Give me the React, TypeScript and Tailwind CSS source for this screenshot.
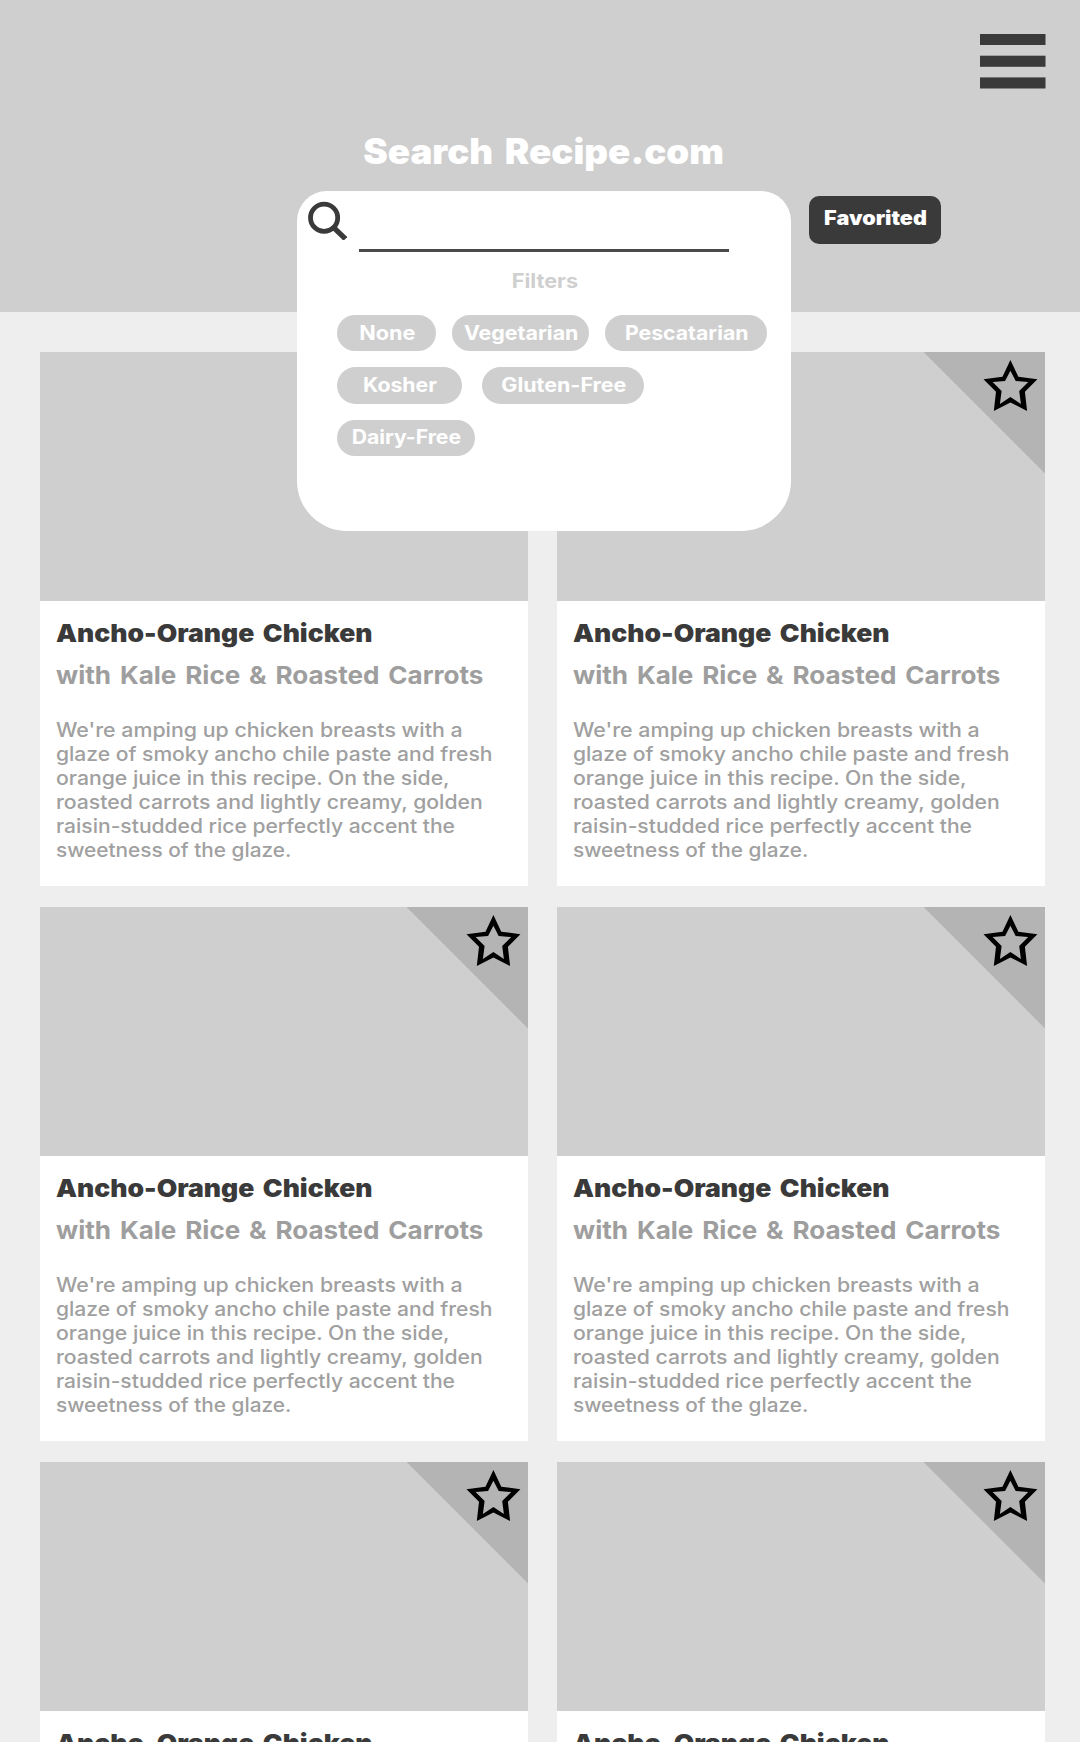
type Filter = { label: string; pill: string; text: string };

const filterRows: { row: string; filters: Filter[] }[] = [
  {
    row: "flex h-9 leading-9",
    filters: [
      { label: "None", pill: "w-[99px] pl-px", text: "scale-x-[1.11]" },
      { label: "Vegetarian", pill: "ml-4 w-[137px] pl-px", text: "scale-x-[1.097]" },
      { label: "Pescatarian", pill: "ml-4 w-[162px] pl-px", text: "scale-x-[1.09]" },
    ],
  },
  {
    row: "mt-4 flex h-[37px] leading-[37px]",
    filters: [
      { label: "Kosher", pill: "w-[125px]", text: "scale-x-[1.09]" },
      { label: "Gluten-Free", pill: "ml-5 w-[162px] pl-px", text: "scale-x-[1.1]" },
    ],
  },
  {
    row: "mt-4 flex h-9 leading-[35px]",
    filters: [{ label: "Dairy-Free", pill: "w-[138px]", text: "scale-x-[1.085]" }],
  },
];

const description = [
  { text: "We're amping up chicken breasts with a", fit: "scale-x-[1.095]" },
  { text: "glaze of smoky ancho chile paste and fresh", fit: "scale-x-[1.08]" },
  { text: "orange juice in this recipe. On the side,", fit: "scale-x-[1.087]" },
  { text: "roasted carrots and lightly creamy, golden", fit: "scale-x-[1.087]" },
  { text: "raisin-studded rice perfectly accent the", fit: "scale-x-[1.08]" },
  { text: "sweetness of the glaze.", fit: "scale-x-[1.066]" },
];

function MenuIcon() {
  return (
    <svg className="h-[55px] w-[66px]" viewBox="0 0 66 55" fill="#3a3a3a">
      <rect x="0" y="0" width="65.5" height="11" />
      <rect x="0" y="21.7" width="65.5" height="11.1" />
      <rect x="0" y="43.4" width="65.5" height="11.1" />
    </svg>
  );
}

function SearchIcon() {
  return (
    <svg className="h-10 w-10" viewBox="0 0 40 40" fill="none" stroke="#3a3a3a">
      <circle cx="17.1" cy="17.7" r="13.6" strokeWidth="4.8" />
      <path d="M26.5 27.3 L38.4 38.9" strokeWidth="5.2" />
    </svg>
  );
}

function FavoriteRibbon() {
  return (
    <svg className="absolute top-0 right-0 h-[122px] w-[122px]" viewBox="0 0 122 122">
      <path d="M0.5 0 H122 V121.5 Z" fill="#b4b4b4" />
      <path
        fillRule="evenodd"
        transform="translate(0.4 0)"
        d="M87 8 L94.9 24.7 L114 27.2 L101.5 39.8 L103.7 59 L87 50.4 L70.4 59 L72.6 39.8 L60.1 27.2 L79.1 24.7 Z M87 18.7 L92.3 29.1 L104.8 30 L95.8 39 L97.5 52 L87 44.9 L76.5 52 L78.2 39 L69.2 30 L81.7 29.1 Z"
      />
    </svg>
  );
}

function RecipeCard({ ribbon }: { ribbon: boolean }) {
  return (
    <article className="h-[534px] bg-white">
      <div className="relative h-[249px] bg-[#cfcfcf]">{ribbon && <FavoriteRibbon />}</div>
      <div className="pt-[17px] pl-4 whitespace-nowrap">
        <h2 className="origin-left scale-x-[1.082] text-[24.5px] leading-[30px] font-black text-[#3a3a3a] [word-spacing:3px]">
          Ancho-Orange Chicken
        </h2>
        <h3 className="mt-3 origin-left scale-x-[1.064] text-[24.5px] leading-[30px] font-bold text-[#9e9e9e] [word-spacing:2.5px]">
          with Kale Rice &amp; Roasted Carrots
        </h3>
        <p className="mt-7 text-[19.5px] leading-6 font-medium text-[#a0a0a0]">
          {description.map((line) => (
            <span key={line.text} className={`block origin-left ${line.fit}`}>
              {line.text}
            </span>
          ))}
        </p>
      </div>
    </article>
  );
}

export default function App() {
  return (
    <div className="h-[1742px] w-[1080px] overflow-hidden bg-[#eeeeee] font-['Inter',sans-serif]">
      <header className="relative z-10 h-[312px] bg-[#cfcfcf]">
        <div className="flex justify-end pt-[34px] pr-[34px]">
          <button aria-label="Menu">
            <MenuIcon />
          </button>
        </div>
        <h1 className="mt-[42px] flex justify-center pl-2 text-[35px] leading-10 font-black text-white [word-spacing:4px]">
          <span className="scale-x-[1.051]">Search Recipe.com</span>
        </h1>
        <div className="mt-5 ml-[297px] flex items-start">
          <section className="h-[340px] w-[494px] rounded-t-[30px] rounded-b-[50px] bg-white">
            <div className="flex h-[61px] pt-[9px] pl-[10px]">
              <SearchIcon />
              <div className="ml-3 h-[52px] w-[370px] border-b-[3px] border-[#4a4a4a]" />
            </div>
            <div className="mt-[17px] flex justify-center pl-px text-[19.5px] leading-6 font-bold text-[#cfcfcf]">
              <span className="scale-x-[1.11]">Filters</span>
            </div>
            <div className="mt-[22px] ml-10 text-[19.5px] font-bold text-white">
              {filterRows.map(({ row, filters }) => (
                <div key={filters[0].label} className={row}>
                  {filters.map((f) => (
                    <button
                      key={f.label}
                      className={`flex shrink-0 justify-center rounded-full bg-[#cfcfcf] ${f.pill}`}
                    >
                      <span className={f.text}>{f.label}</span>
                    </button>
                  ))}
                </div>
              ))}
            </div>
          </section>
          <button className="mt-[5px] ml-[18px] flex h-12 w-[132px] justify-center rounded-[10px] bg-[#3a3a3a] text-[19.5px] leading-[45px] font-black text-white">
            <span className="scale-x-[1.107]">Favorited</span>
          </button>
        </div>
      </header>
      <main className="mt-10 ml-10 grid grid-cols-[488px_488px] gap-x-[29px] gap-y-[21px]">
        {[0, 1, 2, 3, 4, 5].map((i) => (
          <RecipeCard key={i} ribbon={i > 0} />
        ))}
      </main>
    </div>
  );
}
